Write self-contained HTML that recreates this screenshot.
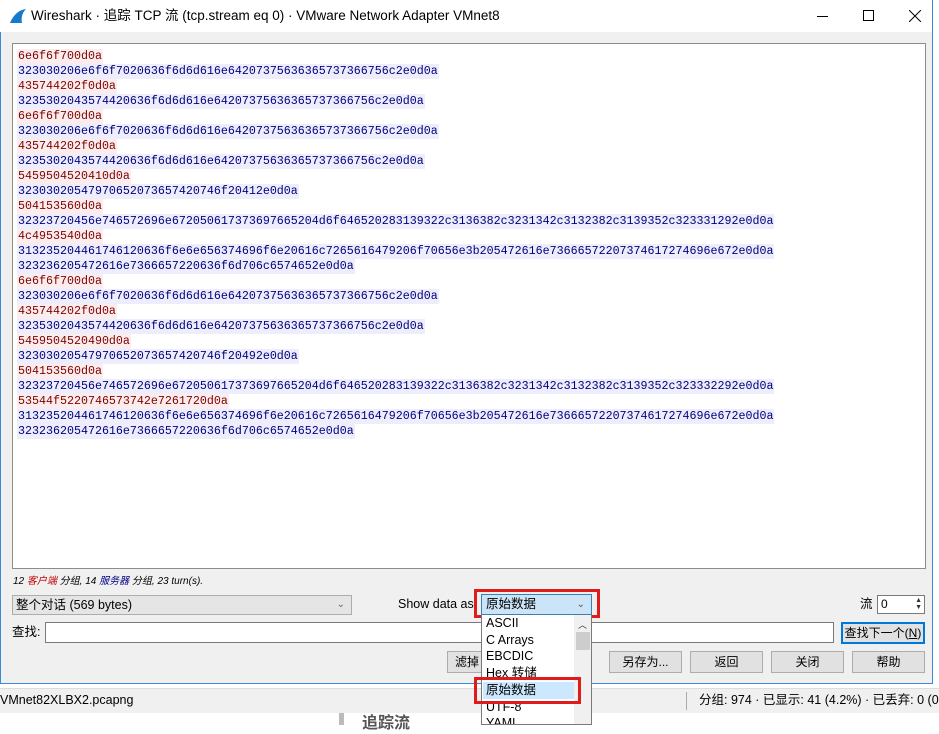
<!DOCTYPE html>
<html><head><meta charset="utf-8"><style>
*{margin:0;padding:0;box-sizing:border-box}
body{width:939px;height:725px;overflow:hidden;background:#fff;position:relative;font-family:"Liberation Sans","Noto Sans CJK SC",sans-serif;font-size:12px;color:#000}
.abs{position:absolute;line-height:16px}
#win{left:0;top:0;width:933px;height:684px;background:#f0f0f0;border:1px solid #3b8ad8;border-top:none}
#title{left:0;top:0;width:932px;height:32px;background:#fff;font-size:13.5px;line-height:32px}
#text{left:12px;top:43px;width:914px;height:526px;background:#fff;border:1px solid #8c8c8c}
.l{position:absolute;left:4px;height:15px;line-height:15px;font-family:"Liberation Mono",monospace;font-size:11.67px;padding:0 1px}
.c{color:#7f0000;background:#fbeded}
.s{color:#00007f;background:#ededfb}
.btn{position:absolute;height:22px;background:#e1e1e1;border:1px solid #adadad;text-align:center;line-height:20px;font-size:12px}
.box{position:absolute;background:#fff;border:1px solid #7a7a7a}
</style></head><body>
<div id="win" class="abs"></div>
<div id="title" class="abs" style="line-height:32px">
<svg class="abs" style="left:9px;top:8px" width="18" height="16" viewBox="0 0 18 16"><path d="M1 15 C4 8 9 2 17 1 C13 5 12 10 13 15 Z" fill="#1679c9"/></svg>
<span class="abs" style="left:31px;top:0;line-height:32px">Wireshark · 追踪 TCP 流 (tcp.stream eq 0) · VMware Network Adapter VMnet8</span>
<div class="abs" style="left:817px;top:16px;width:11px;height:1px;background:#000"></div>
<div class="abs" style="left:863px;top:10px;width:11px;height:11px;border:1px solid #000"></div>
<svg class="abs" style="left:909px;top:10px" width="12" height="12"><path d="M0 0L12 12M12 0L0 12" stroke="#000" stroke-width="1"/></svg>
</div>
<div id="text" class="abs">
<div class="l c" style="top:5px">6e6f6f700d0a</div>
<div class="l s" style="top:20px">323030206e6f6f7020636f6d6d616e64207375636365737366756c2e0d0a</div>
<div class="l c" style="top:35px">435744202f0d0a</div>
<div class="l s" style="top:50px">3235302043574420636f6d6d616e64207375636365737366756c2e0d0a</div>
<div class="l c" style="top:65px">6e6f6f700d0a</div>
<div class="l s" style="top:80px">323030206e6f6f7020636f6d6d616e64207375636365737366756c2e0d0a</div>
<div class="l c" style="top:95px">435744202f0d0a</div>
<div class="l s" style="top:110px">3235302043574420636f6d6d616e64207375636365737366756c2e0d0a</div>
<div class="l c" style="top:125px">5459504520410d0a</div>
<div class="l s" style="top:140px">32303020547970652073657420746f20412e0d0a</div>
<div class="l c" style="top:155px">504153560d0a</div>
<div class="l s" style="top:170px">32323720456e746572696e672050617373697665204d6f646520283139322c3136382c3231342c3132382c3139352c323331292e0d0a</div>
<div class="l c" style="top:185px">4c4953540d0a</div>
<div class="l s" style="top:200px">313235204461746120636f6e6e656374696f6e20616c7265616479206f70656e3b205472616e73666572207374617274696e672e0d0a</div>
<div class="l s" style="top:215px">323236205472616e7366657220636f6d706c6574652e0d0a</div>
<div class="l c" style="top:230px">6e6f6f700d0a</div>
<div class="l s" style="top:245px">323030206e6f6f7020636f6d6d616e64207375636365737366756c2e0d0a</div>
<div class="l c" style="top:260px">435744202f0d0a</div>
<div class="l s" style="top:275px">3235302043574420636f6d6d616e64207375636365737366756c2e0d0a</div>
<div class="l c" style="top:290px">5459504520490d0a</div>
<div class="l s" style="top:305px">32303020547970652073657420746f20492e0d0a</div>
<div class="l c" style="top:320px">504153560d0a</div>
<div class="l s" style="top:335px">32323720456e746572696e672050617373697665204d6f646520283139322c3136382c3231342c3132382c3139352c323332292e0d0a</div>
<div class="l c" style="top:350px">53544f5220746573742e7261720d0a</div>
<div class="l s" style="top:365px">313235204461746120636f6e6e656374696f6e20616c7265616479206f70656e3b205472616e73666572207374617274696e672e0d0a</div>
<div class="l s" style="top:380px">323236205472616e7366657220636f6d706c6574652e0d0a</div>
</div>
<div class="abs" style="left:13px;top:574px;font-size:10px;font-style:italic">12 <span style="color:#c00000">客户端</span> 分组, 14 <span style="color:#00007f">服务器</span> 分组, 23 turn(s).</div>
<div class="abs" style="left:12px;top:595px;width:340px;height:20px;background:#e5e5e5;border:1px solid #adadad;line-height:18px;padding-left:3px;font-size:12.5px">整个对话 (569 bytes)<span class="abs" style="right:6px;top:0;color:#666;font-size:10px;line-height:18px">&#8964;</span></div>
<div class="abs" style="left:398px;top:596px;font-size:12.5px">Show data as</div>
<div class="abs" style="left:481px;top:594px;width:111px;height:21px;background:#cce4f7;border:1px solid #3c7fb1;line-height:19px;padding-left:4px;font-size:12.5px">原始数据<span class="abs" style="right:6px;top:0;color:#555;font-size:10px;line-height:19px">&#8964;</span></div>
<div class="abs" style="left:474px;top:589px;width:126px;height:29px;border:3px solid #e01b1b"></div>
<div class="abs" style="left:860px;top:596px;font-size:12.5px">流</div>
<div class="box" style="left:877px;top:595px;width:48px;height:19px;padding-left:3px;line-height:17px">0<span class="abs" style="right:2px;top:1px;font-size:7px;line-height:7px;color:#333">▲<br>▼</span></div>
<div class="abs" style="left:12px;top:624px;font-size:12.5px">查找:</div>
<div class="box" style="left:45px;top:622px;width:789px;height:21px"></div>
<div class="btn" style="left:841px;top:622px;width:84px;border:2px solid #0078d7;line-height:18px">查找下一个(<u>N</u>)</div>
<div class="btn" style="left:447px;top:651px;width:40px">滤掉</div>
<div class="btn" style="left:609px;top:651px;width:73px">另存为...</div>
<div class="btn" style="left:690px;top:651px;width:73px">返回</div>
<div class="btn" style="left:771px;top:651px;width:73px">关闭</div>
<div class="btn" style="left:852px;top:651px;width:73px">帮助</div>
<div class="abs" style="left:0;top:688px;width:939px;height:25px;background:#f0f0f0;border-top:1px solid #ddd"></div>
<div class="abs" style="left:0;top:692px;font-size:12.5px">VMnet82XLBX2.pcapng</div>
<div class="abs" style="left:686px;top:692px;width:1px;height:18px;background:#aaa"></div>
<div class="abs" style="left:699px;top:692px;font-size:12.5px;white-space:nowrap">分组: 974 · 已显示: 41 (4.2%) · 已丢弃: 0 (0.</div>
<div class="abs" style="left:339px;top:713px;width:5px;height:12px;background:#bbb"></div>
<div class="abs" style="left:362px;top:714px;font-size:16px;color:#555;font-weight:bold;line-height:20px">追踪流</div>
<div class="abs" style="left:481px;top:615px;width:111px;height:110px;background:#fff;border:1px solid #7a7a7a;border-top:none;font-size:12.5px;line-height:16.7px;padding-left:4px;overflow:hidden">
ASCII<br>C Arrays<br>EBCDIC<br>Hex 转储<br><span style="display:block;margin-left:-3px;padding-left:3px;width:92px;background:#cce8ff">原始数据</span>UTF-8<br>YAML
<div class="abs" style="right:0;top:0;width:17px;height:110px;background:#f0f0f0"></div>
<div class="abs" style="right:4px;top:2px;font-size:9px;color:#333">︿</div>
<div class="abs" style="right:1px;top:17px;width:14px;height:18px;background:#cdcdcd"></div>
</div>
<div class="abs" style="left:474px;top:677px;width:107px;height:27px;border:3px solid #e01b1b"></div>
</body></html>
